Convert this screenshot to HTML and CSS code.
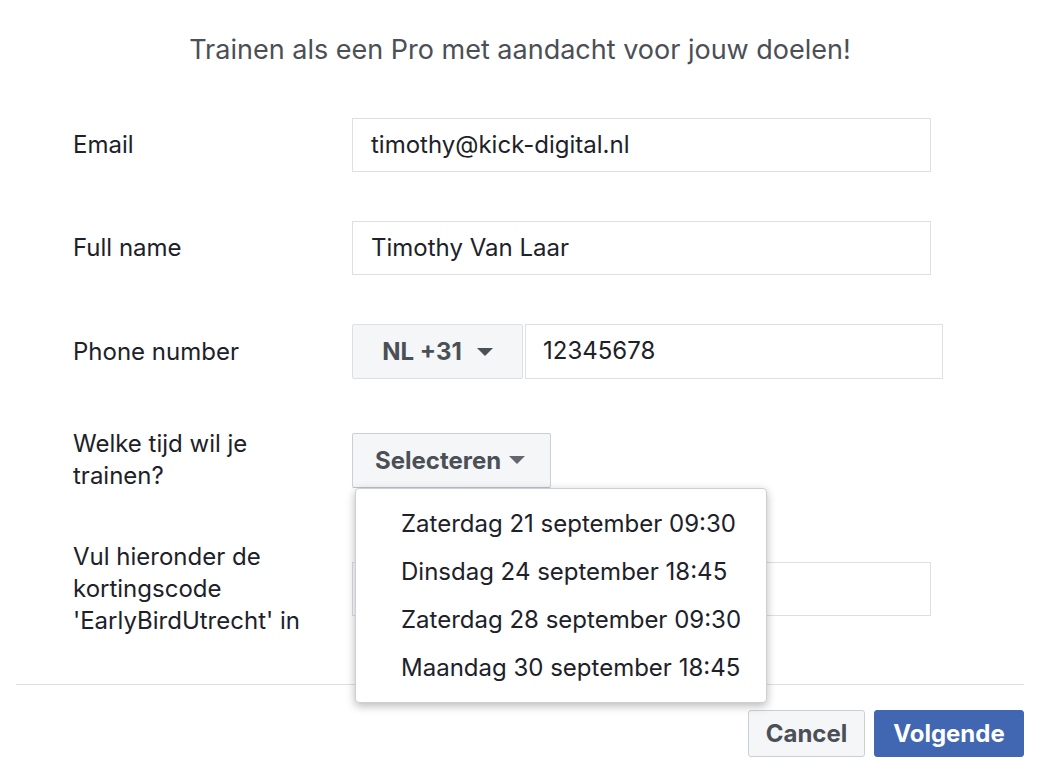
FILE: index.html
```html
<!DOCTYPE html>
<html lang="nl">
<head>
<meta charset="utf-8">
<title>Trainen als een Pro</title>
<link rel="stylesheet" href="styles.css">
</head>
<body>
<div class="page">
  <h1 class="title">Trainen als een Pro met aandacht voor jouw doelen!</h1>
  <div class="form">
    <div class="row">
      <div class="label">Email</div>
      <div class="field"><div class="input wide">timothy@kick-digital.nl</div></div>
    </div>
    <div class="row">
      <div class="label">Full name</div>
      <div class="field"><div class="input wide">Timothy Van Laar</div></div>
    </div>
    <div class="row">
      <div class="label">Phone number</div>
      <div class="field phone">
        <div class="country">NL +31 <span class="caret dark"></span></div>
        <div class="input phone-input">12345678</div>
      </div>
    </div>
    <div class="row">
      <div class="label">Welke tijd wil je trainen?</div>
      <div class="field select-wrap">
        <div class="select">Selecteren <span class="caret"></span></div>
        <ul class="menu">
          <li>Zaterdag 21 september 09:30</li>
          <li>Dinsdag 24 september 18:45</li>
          <li>Zaterdag 28 september 09:30</li>
          <li>Maandag 30 september 18:45</li>
        </ul>
      </div>
    </div>
    <div class="row">
      <div class="label">Vul hieronder de kortingscode 'EarlyBirdUtrecht' in</div>
      <div class="field"><div class="input wide"></div></div>
    </div>
  </div>
  <div class="footer">
    <button class="btn cancel">Cancel</button>
    <button class="btn primary">Volgende</button>
  </div>
</div>
</body>
</html>
```

FILE: styles.css
```css
* { box-sizing: border-box; }
body {
  margin: 0;
  background: #fff;
  font-family: Inter, "Noto Sans", "Liberation Sans", sans-serif;
  color: #1d2129;
}
.page {
  width: 1040px;
  padding: 0 16px;
}
.title {
  margin: 0;
  padding-top: 33px;
  height: 66px;
  line-height: 34px;
  font-size: 27px;
  font-weight: 400;
  color: #4b4f56;
  text-align: center;
}
.form {
  display: flex;
  flex-direction: column;
  gap: 49px;
  padding-top: 52px;
  padding-left: 57px;
}
.row {
  display: flex;
  align-items: center;
}
.label {
  width: 279px;
  padding-right: 40px;
  font-size: 24px;
  line-height: 32px;
  color: #1d2129;
}
.field {
  display: flex;
}
.input {
  height: 54px;
  border: 1px solid #dddfe2;
  background: #fff;
  padding: 0 18px;
  font-size: 24px;
  line-height: 52px;
  color: #1d2129;
}
.wide { width: 579px; }
.phone { gap: 2px; }
.country {
  width: 171px;
  height: 55px;
  border: 1px solid #dddfe2;
  border-radius: 2px;
  background: #f5f6f7;
  font-size: 24px;
  font-weight: 700;
  color: #4b4f56;
  display: flex;
  align-items: center;
  justify-content: center;
  gap: 15px;
}
.phone-input {
  width: 418px;
  height: 55px;
  padding-left: 17px;
}
.caret {
  display: inline-block;
  width: 0;
  height: 0;
  border-left: 8px solid transparent;
  border-right: 8px solid transparent;
  border-top: 8px solid #606770;
}
.caret.dark { border-top-color: #4b4f56; }
.select-wrap { position: relative; }
.select {
  width: 199px;
  height: 55px;
  border: 1px solid #ccd0d5;
  border-bottom-color: #bec3c9;
  border-radius: 2px;
  background: #f5f6f7;
  font-size: 24px;
  font-weight: 700;
  color: #4b4f56;
  display: flex;
  align-items: center;
  padding-left: 22px;
  gap: 8px;
}
.menu {
  position: absolute;
  top: 55px;
  left: 3px;
  width: 412px;
  margin: 0;
  padding: 11px 0 10px;
  list-style: none;
  background: #fff;
  border: 1px solid #ccd0d5;
  border-radius: 4px;
  box-shadow: 0 3px 10px rgba(0, 0, 0, 0.28);
  z-index: 5;
}
.menu li {
  height: 48px;
  line-height: 48px;
  padding-left: 45px;
  font-size: 24px;
  color: #1d2129;
  white-space: nowrap;
}
.footer {
  margin-top: 47px;
  border-top: 1px solid #dddfe2;
  padding-top: 25px;
  display: flex;
  justify-content: flex-end;
  gap: 9px;
}
.btn {
  height: 47px;
  border-radius: 3px;
  font-family: inherit;
  font-size: 24px;
  font-weight: 700;
  padding: 0;
  cursor: pointer;
}
.cancel {
  width: 117px;
  background: #f5f6f7;
  border: 1px solid #ccd0d5;
  color: #4b4f56;
}
.primary {
  width: 150px;
  background: #4267b2;
  border: 1px solid #4267b2;
  color: #fff;
}
```
